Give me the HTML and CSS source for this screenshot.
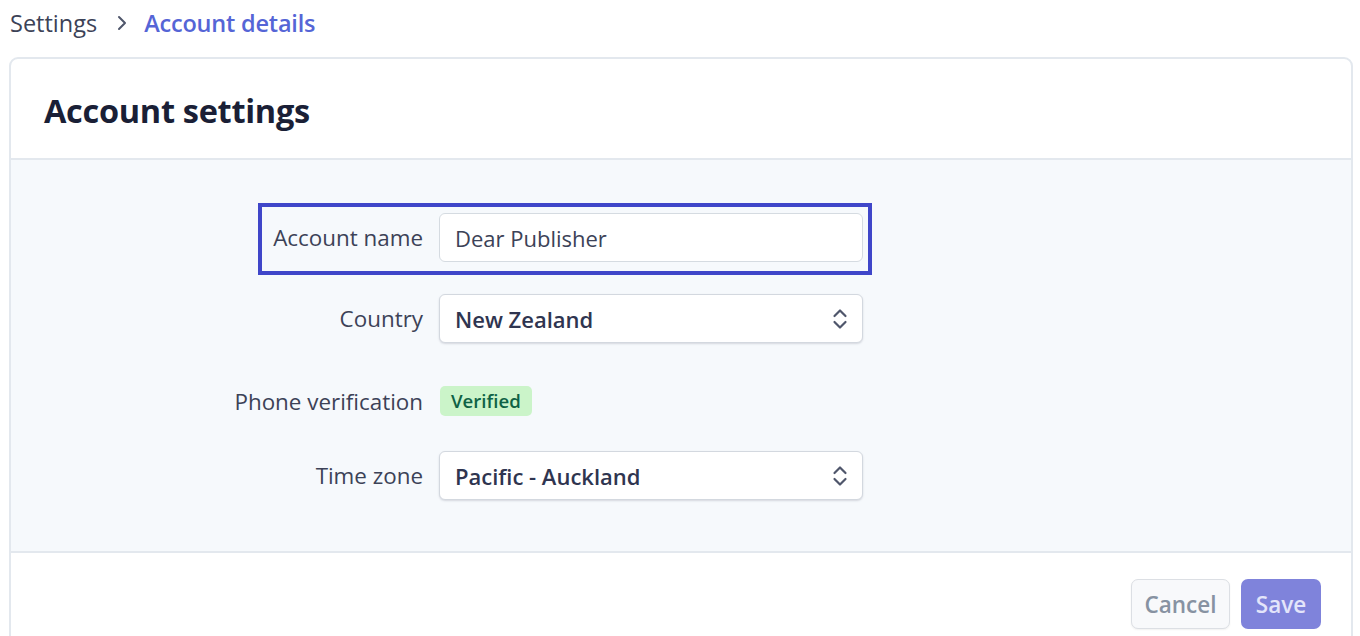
FILE: index.html
```html
<!DOCTYPE html>
<html lang="en">
<head>
<meta charset="utf-8">
<title>Account details</title>
<link rel="stylesheet" href="styles.css">
</head>
<body>
<nav class="crumbs">
  <span class="crumb">Settings</span>
  <svg class="crumb-sep" width="14" height="18" viewBox="0 0 14 18"><path d="M4 3l6 6-6 6" fill="none" stroke="#4f566b" stroke-width="2" stroke-linecap="round" stroke-linejoin="round"/></svg>
  <span class="crumb crumb--current">Account details</span>
</nav>
<section class="card">
  <header class="card-head"><h1>Account settings</h1></header>
  <div class="card-body">
    <div class="row row--focus">
      <label class="label">Account name</label>
      <div class="field input">Dear Publisher</div>
    </div>
    <div class="row">
      <label class="label">Country</label>
      <div class="field select"><span>New Zealand</span>
        <svg width="16" height="22" viewBox="0 0 16 22"><path d="M2.5 8l5.5-5.5L13.5 8M2.5 14l5.5 5.5 5.5-5.5" fill="none" stroke="#4f566b" stroke-width="2.2" stroke-linecap="round" stroke-linejoin="round"/></svg>
      </div>
    </div>
    <div class="row row--badge">
      <label class="label">Phone verification</label>
      <div class="badge-wrap"><span class="badge">Verified</span></div>
    </div>
    <div class="row row--last">
      <label class="label">Time zone</label>
      <div class="field select"><span>Pacific - Auckland</span>
        <svg width="16" height="22" viewBox="0 0 16 22"><path d="M2.5 8l5.5-5.5L13.5 8M2.5 14l5.5 5.5 5.5-5.5" fill="none" stroke="#4f566b" stroke-width="2.2" stroke-linecap="round" stroke-linejoin="round"/></svg>
      </div>
    </div>
  </div>
  <footer class="card-foot">
    <button class="btn btn--cancel">Cancel</button>
    <button class="btn btn--save">Save</button>
  </footer>
</section>
</body>
</html>
```
FILE: styles.css
```css
*, *::before, *::after { box-sizing: border-box; }
html, body { margin: 0; background: #fff; }
body {
  font-family: "Open Sans", "Noto Sans", sans-serif;
  color: #3c4257;
  overflow: hidden;
  height: 636px;
}
.crumbs {
  display: flex;
  align-items: center;
  height: 48px;
  padding: 0 0 2px 10px;
  font-size: 23.5px;
}
.crumb { color: #3c4257; }
.crumb-sep { margin: 0 15px 0 18px; }
.crumb--current { color: #5565d6; font-weight: 600; letter-spacing: -0.2px; }

.card {
  margin: 9px 7px 0 9px;
  border: 2px solid #e3e8ee;
  border-radius: 9px;
  overflow: hidden;
  height: 600px;
}
.card-head {
  height: 101px;
  display: flex;
  align-items: center;
  padding-left: 33px;
  border-bottom: 2px solid #e3e8ee;
}
.card-head h1 {
  margin: 4px 0 0;
  font-size: 32.5px;
  font-weight: 700;
  color: #1a1f36;
  letter-spacing: -0.3px;
}
.card-body {
  background: #f6f9fc;
  padding: 53px 0 51px;
  display: flex;
  flex-direction: column;
  gap: 32px;
  border-bottom: 2px solid #e3e8ee;
}
.row {
  display: flex;
  align-items: center;
  gap: 16px;
  height: 49px;
  position: relative;
}
.row--badge { height: 52px; }
.row--last { margin-top: -8px; }
.row--focus::after {
  content: "";
  position: absolute;
  left: 247px;
  top: -10px;
  width: 614px;
  height: 72px;
  border: 4px solid #3f46c9;
  pointer-events: none;
}
.label {
  width: 412px;
  text-align: right;
  font-size: 22.4px;
  color: #3c4257;
}
.field {
  width: 424px;
  height: 49px;
  background: #fff;
  border: 1px solid #d5dbe1;
  border-radius: 6px;
  display: flex;
  align-items: center;
  padding: 0 15px;
  font-size: 22px;
  color: #3c4257;
}
.select {
  justify-content: space-between;
  font-weight: 600;
  padding-right: 14px;
  border-color: #d3d8df;
  box-shadow: 0 1px 2px rgba(60, 66, 87, 0.18);
}
.select span { color: #2f3550; }
.badge-wrap { width: 424px; }
.badge {
  display: inline-block;
  margin-left: 1px;
  background: #cbf4c9;
  color: #0e6245;
  font-weight: 600;
  font-size: 18.6px;
  line-height: 30px;
  padding: 0 11px;
  border-radius: 5px;
}
.card-foot {
  display: flex;
  justify-content: flex-end;
  gap: 11px;
  padding: 26px 30px 0 0;
}
.btn {
  height: 50px;
  border-radius: 7px;
  font-family: inherit;
  font-size: 22.5px;
  font-weight: 600;
  padding: 0;
}
.btn--cancel {
  width: 99px;
  background: #f8f9fb;
  border: 1px solid #dcdfe4;
  color: #8792a2;
  box-shadow: 0 1px 2px rgba(0,0,0,0.06);
}
.btn--save {
  width: 80px;
  background: #7f83db;
  border: 0;
  color: #e3e5fa;
}
```
